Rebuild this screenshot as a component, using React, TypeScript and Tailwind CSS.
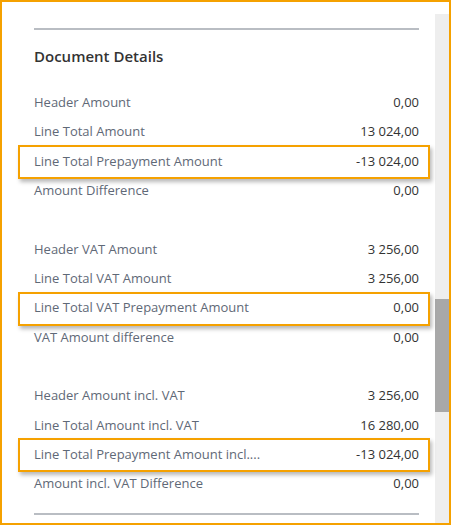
import React from "react";

type Row = { label: string; value: string; hl?: boolean };

const groups: Row[][] = [
  [
    { label: "Header Amount", value: "0,00" },
    { label: "Line Total Amount", value: "13 024,00" },
    { label: "Line Total Prepayment Amount", value: "-13 024,00", hl: true },
    { label: "Amount Difference", value: "0,00" },
  ],
  [
    { label: "Header VAT Amount", value: "3 256,00" },
    { label: "Line Total VAT Amount", value: "3 256,00" },
    { label: "Line Total VAT Prepayment Amount", value: "0,00", hl: true },
    { label: "VAT Amount difference", value: "0,00" },
  ],
  [
    { label: "Header Amount incl. VAT", value: "3 256,00" },
    { label: "Line Total Amount incl. VAT", value: "16 280,00" },
    { label: "Line Total Prepayment Amount incl....", value: "-13 024,00", hl: true },
    { label: "Amount incl. VAT Difference", value: "0,00" },
  ],
];

function RowItem({ r }: { r: Row }) {
  return (
    <div className="relative flex h-[29.33px] items-center justify-between text-[13px]">
      {r.hl && (
        <div className="absolute left-[-16px] right-[-11px] top-[-1.5px] bottom-[-3px] border-[2.5px] border-[#f5a100] shadow-[2px_3px_4px_rgba(0,0,0,0.28)]" />
      )}
      <span className="text-[#5f6977]">{r.label}</span>
      <span className="text-[#333333]">{r.value}</span>
    </div>
  );
}

export default function App() {
  return (
    <div
      className="flex h-[525px] w-[451px] border-2 border-[#f5a100] bg-white"
      style={{ fontFamily: '"Open Sans", "Noto Sans", sans-serif' }}
    >
      <div className="flex flex-1 flex-col pl-[32px] pr-[16px] pt-[26px]">
        <div className="h-[2px] bg-[#b9bdc3]" />
        <div className="mt-[15px] text-[15px] font-semibold text-[#333333]">Document Details</div>
        <div className="mt-[20.5px] flex flex-col gap-[29.33px]">
          {groups.map((g, i) => (
            <div key={i} className="flex flex-col">
              {g.map((r) => (
                <RowItem key={r.label} r={r} />
              ))}
            </div>
          ))}
        </div>
        <div className="mt-[14px] h-[2px] bg-[#b9bdc3]" />
      </div>
      <div className="flex w-[14px] flex-col pt-[12px]">
        <div className="flex flex-1 flex-col bg-[#eeeeee]">
          <div className="mt-[285px] h-[113px] bg-[#a8a8a8]" />
        </div>
      </div>
    </div>
  );
}
